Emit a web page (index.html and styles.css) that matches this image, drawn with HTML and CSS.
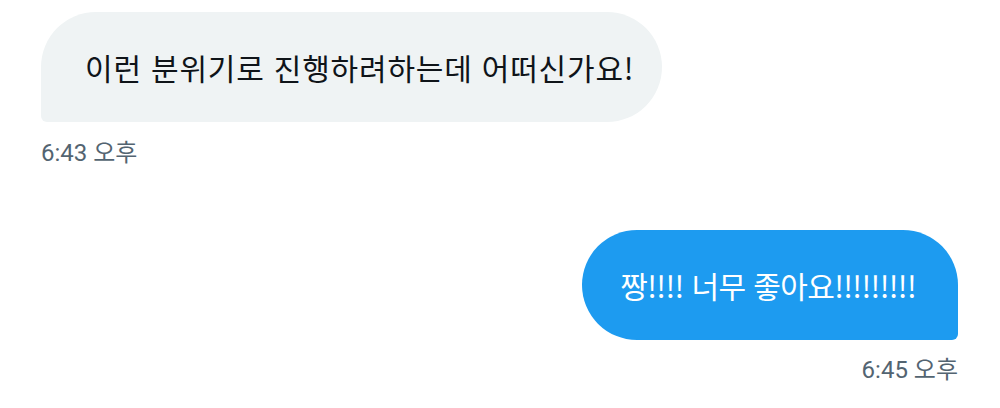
FILE: index.html
```html
<!DOCTYPE html>
<html lang="ko">
<head>
<meta charset="utf-8">
<link rel="stylesheet" href="styles.css">
</head>
<body>
<div class="chat">
  <div class="group received">
    <div class="bubble">이런 분위기로 진행하려하는데 어떠신가요!</div>
    <div class="time">6:43 오후</div>
  </div>
  <div class="group sent">
    <div class="bubble">짱!!!! 너무 좋아요!!!!!!!!!</div>
    <div class="time">6:45 오후</div>
  </div>
</div>
</body>
</html>
```
FILE: styles.css
```css
html, body {
  margin: 0;
  padding: 0;
  background: #ffffff;
}
body {
  width: 1000px;
  height: 408px;
  overflow: hidden;
  font-family: "Noto Sans CJK KR", "Noto Sans", sans-serif;
}
.chat {
  display: flex;
  flex-direction: column;
  gap: 62px;
  padding: 12px 42px 0 41px;
}
.group {
  display: flex;
  flex-direction: column;
}
.received { align-items: flex-start; }
.sent { align-items: flex-end; }
.bubble {
  height: 110px;
  box-sizing: border-box;
  display: flex;
  align-items: center;
  font-size: 30px;
  line-height: 40px;
  white-space: nowrap;
}
.received .bubble {
  background: #eff3f4;
  color: #0f1419;
  border-radius: 55px 55px 55px 6px;
  padding: 0 28px 0 44px;
  letter-spacing: 0.8px;
}
.sent .bubble {
  background: #1d9bf0;
  color: #ffffff;
  border-radius: 55px 55px 6px 55px;
  padding: 0 42px 0 38px;
  letter-spacing: -0.6px;
}
.time {
  margin-top: 16px;
  font-family: "Roboto", "Noto Sans CJK KR", sans-serif;
  font-size: 24px;
  line-height: 30px;
  color: #536471;
}
.sent .time { margin-top: 15px; }
```
